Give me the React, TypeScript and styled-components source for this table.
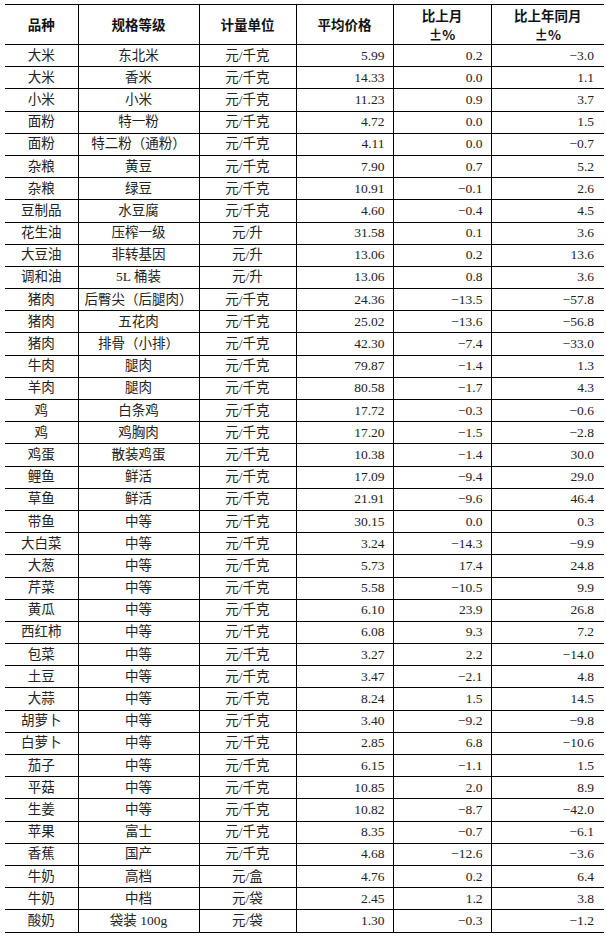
import React from "react";
import styled, { createGlobalStyle } from "styled-components";

const GlobalStyle = createGlobalStyle`
  html, body { margin: 0; padding: 0; background: #fff; }
  body { font-family: "Liberation Serif", "Noto Sans CJK SC", serif; color: #222; }
`;

const Page = styled.div`
  padding: 4px 2px 0 5px;
`;

const Table = styled.table`
  width: 599px;
  border-collapse: collapse;
  table-layout: fixed;
  font-family: "Liberation Serif", "Noto Sans CJK SC", serif;
  font-size: 13.5px;
`;

const Col = styled.col<{ $w: number }>`
  width: ${(p) => p.$w}px;
`;

const HeadCell = styled.th`
  height: 39px;
  padding: 0;
  border-top: 1px solid #000;
  border-bottom: 1px solid #000;
  border-left: 1px solid #000;
  &:first-child { border-left: none; }
  font-family: "Noto Sans CJK SC", sans-serif;
  font-weight: 700;
  font-size: 13.5px;
  line-height: 19px;
  color: #111;
  text-align: center;
  vertical-align: middle;
`;

const Cell = styled.td<{ $num?: boolean }>`
  height: 21.2px;
  padding: 0 ${(p) => (p.$num ? "8px" : "0")} 0 0;
  border-bottom: 1px solid #000;
  border-left: 1px solid #000;
  &:first-child { border-left: none; }
  text-align: ${(p) => (p.$num ? "right" : "center")};
  vertical-align: middle;
  line-height: 18px;
  white-space: nowrap;
`;

const LastCell = styled(Cell)`
  padding-right: 10px;
`;

const rows: string[][] = [
  ["大米", "东北米", "元/千克", "5.99", "0.2", "−3.0"],
  ["大米", "香米", "元/千克", "14.33", "0.0", "1.1"],
  ["小米", "小米", "元/千克", "11.23", "0.9", "3.7"],
  ["面粉", "特一粉", "元/千克", "4.72", "0.0", "1.5"],
  ["面粉", "特二粉（通粉）", "元/千克", "4.11", "0.0", "−0.7"],
  ["杂粮", "黄豆", "元/千克", "7.90", "0.7", "5.2"],
  ["杂粮", "绿豆", "元/千克", "10.91", "−0.1", "2.6"],
  ["豆制品", "水豆腐", "元/千克", "4.60", "−0.4", "4.5"],
  ["花生油", "压榨一级", "元/升", "31.58", "0.1", "3.6"],
  ["大豆油", "非转基因", "元/升", "13.06", "0.2", "13.6"],
  ["调和油", "5L 桶装", "元/升", "13.06", "0.8", "3.6"],
  ["猪肉", "后臀尖（后腿肉）", "元/千克", "24.36", "−13.5", "−57.8"],
  ["猪肉", "五花肉", "元/千克", "25.02", "−13.6", "−56.8"],
  ["猪肉", "排骨（小排）", "元/千克", "42.30", "−7.4", "−33.0"],
  ["牛肉", "腿肉", "元/千克", "79.87", "−1.4", "1.3"],
  ["羊肉", "腿肉", "元/千克", "80.58", "−1.7", "4.3"],
  ["鸡", "白条鸡", "元/千克", "17.72", "−0.3", "−0.6"],
  ["鸡", "鸡胸肉", "元/千克", "17.20", "−1.5", "−2.8"],
  ["鸡蛋", "散装鸡蛋", "元/千克", "10.38", "−1.4", "30.0"],
  ["鲤鱼", "鲜活", "元/千克", "17.09", "−9.4", "29.0"],
  ["草鱼", "鲜活", "元/千克", "21.91", "−9.6", "46.4"],
  ["带鱼", "中等", "元/千克", "30.15", "0.0", "0.3"],
  ["大白菜", "中等", "元/千克", "3.24", "−14.3", "−9.9"],
  ["大葱", "中等", "元/千克", "5.73", "17.4", "24.8"],
  ["芹菜", "中等", "元/千克", "5.58", "−10.5", "9.9"],
  ["黄瓜", "中等", "元/千克", "6.10", "23.9", "26.8"],
  ["西红柿", "中等", "元/千克", "6.08", "9.3", "7.2"],
  ["包菜", "中等", "元/千克", "3.27", "2.2", "−14.0"],
  ["土豆", "中等", "元/千克", "3.47", "−2.1", "4.8"],
  ["大蒜", "中等", "元/千克", "8.24", "1.5", "14.5"],
  ["胡萝卜", "中等", "元/千克", "3.40", "−9.2", "−9.8"],
  ["白萝卜", "中等", "元/千克", "2.85", "6.8", "−10.6"],
  ["茄子", "中等", "元/千克", "6.15", "−1.1", "1.5"],
  ["平菇", "中等", "元/千克", "10.85", "2.0", "8.9"],
  ["生姜", "中等", "元/千克", "10.82", "−8.7", "−42.0"],
  ["苹果", "富士", "元/千克", "8.35", "−0.7", "−6.1"],
  ["香蕉", "国产", "元/千克", "4.68", "−12.6", "−3.6"],
  ["牛奶", "高档", "元/盒", "4.76", "0.2", "6.4"],
  ["牛奶", "中档", "元/袋", "2.45", "1.2", "3.8"],
  ["酸奶", "袋装 100g", "元/袋", "1.30", "−0.3", "−1.2"],
];

export default function App() {
  return (
    <>
      <GlobalStyle />
      <Page>
        <Table>
          <colgroup>
            <Col $w={73} />
            <Col $w={121} />
            <Col $w={97} />
            <Col $w={97} />
            <Col $w={98} />
            <Col $w={113} />
          </colgroup>
          <thead>
            <tr>
              <HeadCell>品种</HeadCell>
              <HeadCell>规格等级</HeadCell>
              <HeadCell>计量单位</HeadCell>
              <HeadCell>平均价格</HeadCell>
              <HeadCell>
                比上月
                <br />±%
              </HeadCell>
              <HeadCell>
                比上年同月
                <br />±%
              </HeadCell>
            </tr>
          </thead>
          <tbody>
            {rows.map((r, i) => (
              <tr key={i}>
                <Cell>{r[0]}</Cell>
                <Cell>{r[1]}</Cell>
                <Cell>{r[2]}</Cell>
                <Cell $num>{r[3]}</Cell>
                <Cell $num>{r[4]}</Cell>
                <LastCell $num>{r[5]}</LastCell>
              </tr>
            ))}
          </tbody>
        </Table>
      </Page>
    </>
  );
}
